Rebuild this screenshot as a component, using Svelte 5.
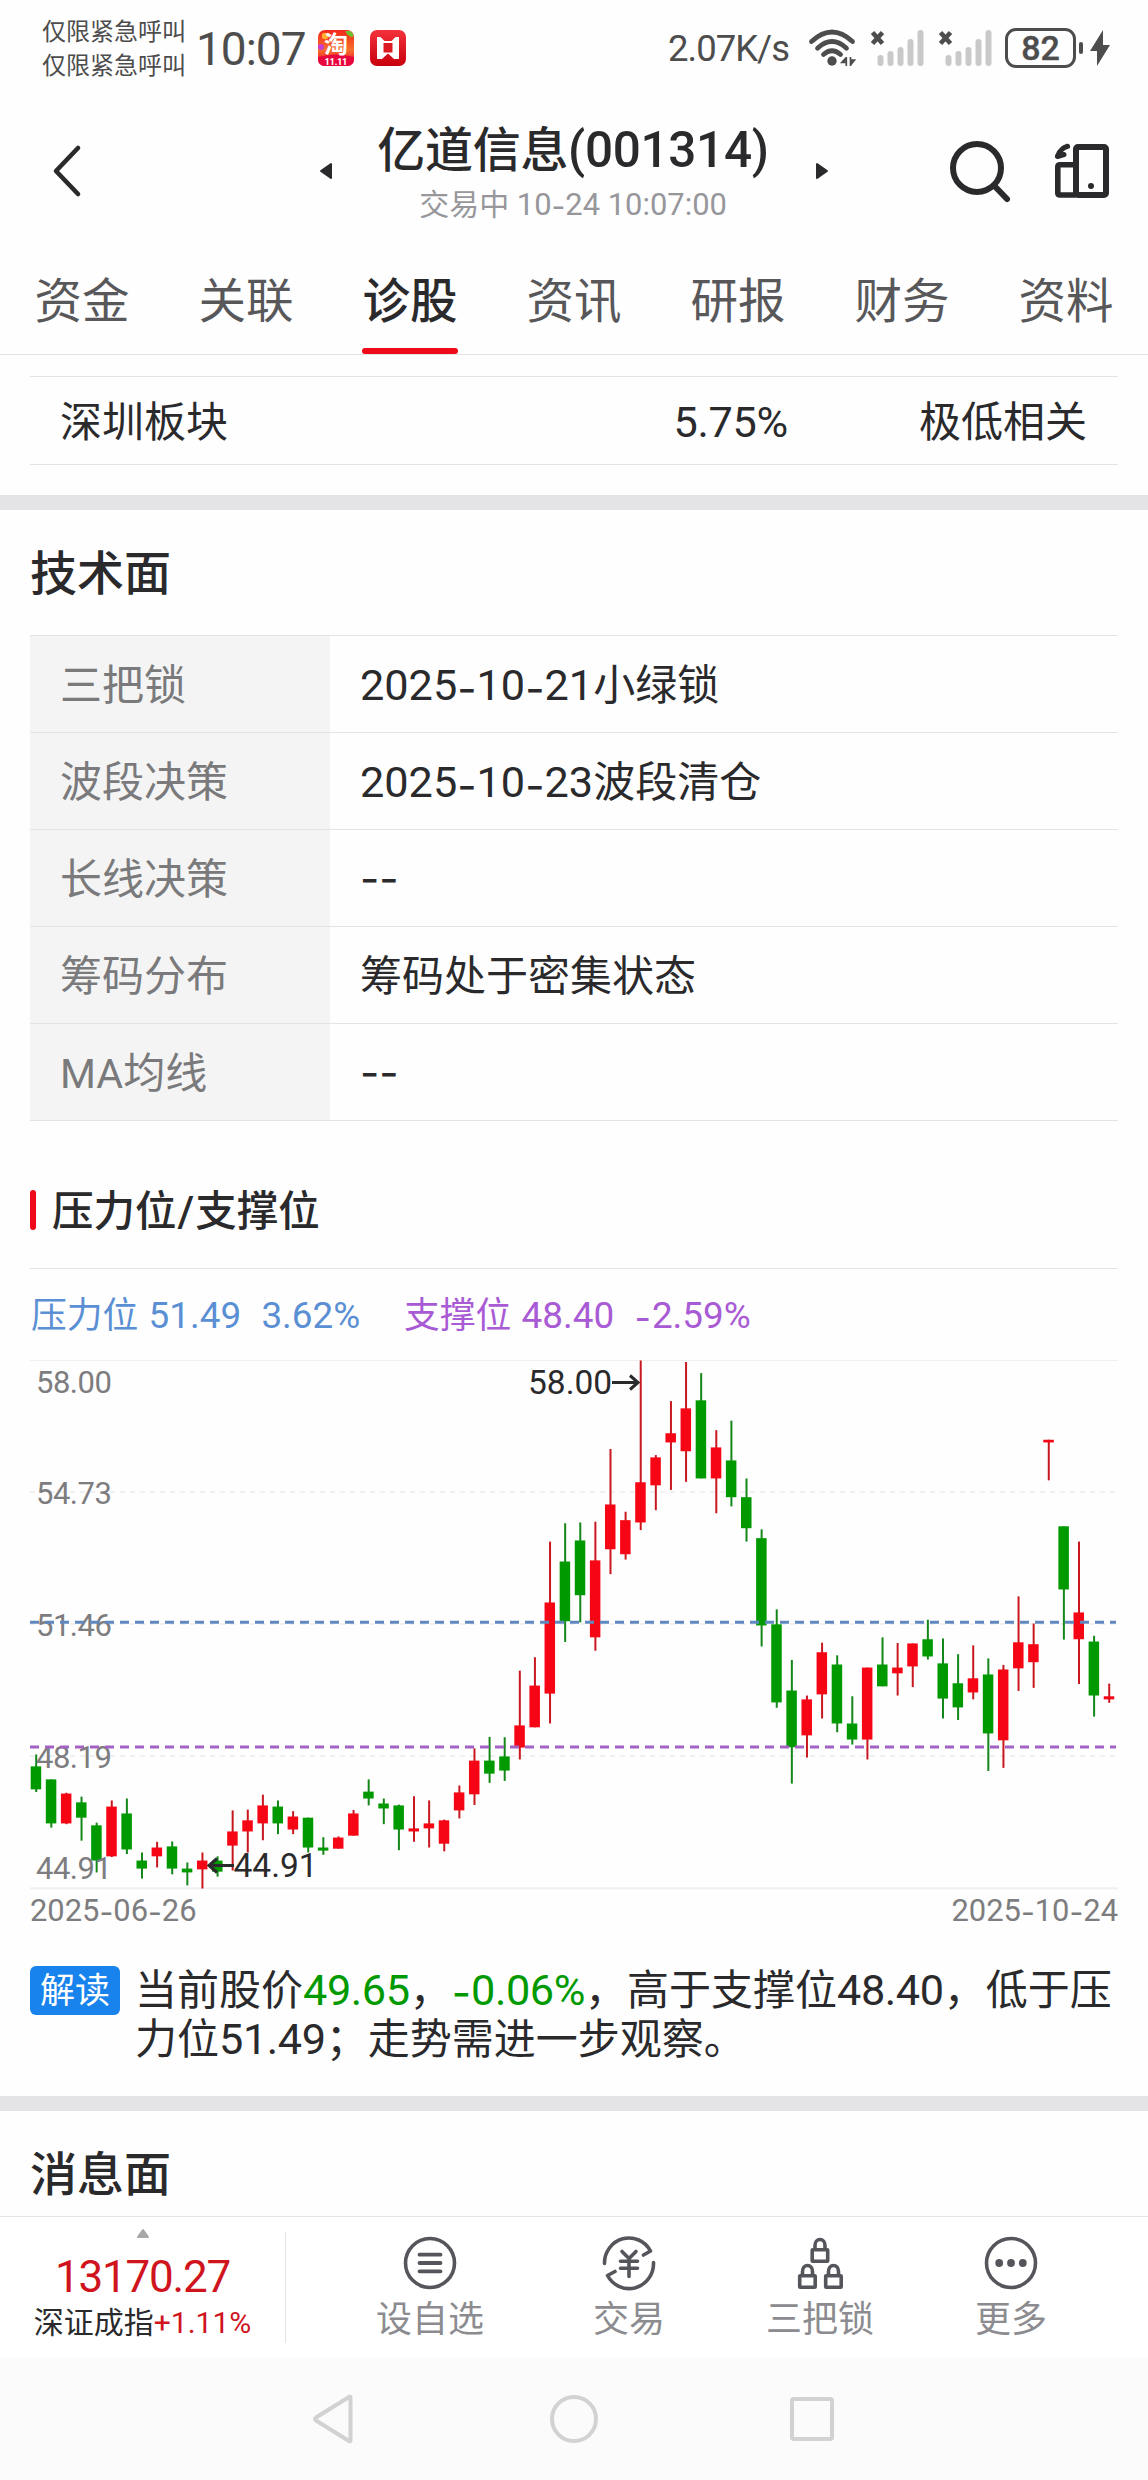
<script>
  const tabs = ['资金', '关联', '诊股', '资讯', '研报', '财务', '资料'];
  const rows = [
    ['三把锁', '2025-10-21小绿锁'],
    ['波段决策', '2025-10-23波段清仓'],
    ['长线决策', '--'],
    ['筹码分布', '筹码处于密集状态'],
    ['MA均线', '--']
  ];

  // Each candle: high, body top, body bottom, low, direction (1 = up, 0 = down).
  // Levels count downwards from TOP to BOTTOM of the plot.
  const TOP = 53;
  const BOTTOM = 1432;
  const HEIGHT = 528;
  const candles = [
    [1082, 1113, 1173, 1180, 0], [1147, 1147, 1262, 1273, 0], [1182, 1184, 1262, 1264, 1],
    [1192, 1207, 1247, 1307, 0], [1260, 1267, 1359, 1390, 0], [1202, 1218, 1348, 1350, 1],
    [1197, 1236, 1330, 1342, 0], [1338, 1359, 1380, 1406, 0], [1310, 1325, 1348, 1377, 1],
    [1309, 1322, 1380, 1395, 0], [1364, 1380, 1390, 1424, 0], [1338, 1359, 1382, 1432, 1],
    [1348, 1359, 1388, 1401, 0], [1228, 1283, 1320, 1385, 1], [1226, 1254, 1283, 1338, 1],
    [1187, 1215, 1262, 1306, 1], [1202, 1218, 1262, 1290, 0], [1230, 1244, 1278, 1290, 1],
    [1247, 1247, 1325, 1338, 0], [1298, 1325, 1333, 1344, 0], [1296, 1299, 1328, 1328, 1],
    [1227, 1236, 1294, 1294, 1], [1147, 1179, 1197, 1215, 0], [1197, 1210, 1223, 1264, 0],
    [1213, 1215, 1278, 1332, 0], [1191, 1275, 1283, 1310, 1], [1202, 1262, 1275, 1325, 1],
    [1252, 1254, 1315, 1335, 1], [1163, 1181, 1228, 1249, 1], [1066, 1098, 1186, 1214, 1],
    [1036, 1098, 1132, 1156, 0], [1037, 1087, 1124, 1151, 0], [863, 1006, 1064, 1095, 1],
    [828, 902, 1011, 1011, 1], [526, 685, 923, 1001, 1], [478, 578, 734, 788, 0],
    [476, 523, 666, 737, 0], [474, 575, 776, 811, 1], [284, 429, 546, 611, 1],
    [448, 470, 559, 573, 1], [53, 371, 476, 496, 1], [300, 306, 379, 444, 1],
    [159, 243, 267, 391, 1], [57, 178, 290, 370, 1], [86, 157, 361, 361, 0],
    [235, 280, 361, 452, 1], [210, 314, 410, 434, 0], [361, 410, 491, 526, 0],
    [494, 517, 745, 800, 0], [703, 742, 946, 960, 0], [835, 915, 1063, 1158, 0],
    [928, 938, 1032, 1090, 1], [790, 815, 925, 988, 1], [823, 847, 1001, 1024, 0],
    [930, 1001, 1043, 1056, 0], [855, 855, 1043, 1095, 1], [776, 847, 904, 904, 0],
    [791, 855, 870, 928, 1], [792, 792, 852, 906, 1], [730, 781, 826, 834, 0],
    [779, 844, 936, 988, 0], [820, 896, 959, 992, 0], [797, 883, 920, 938, 1],
    [831, 873, 1027, 1125, 0], [848, 860, 1045, 1117, 1], [669, 789, 857, 916, 1],
    [740, 794, 841, 908, 1], [260, 260, 267, 366, 1], [486, 486, 651, 782, 0],
    [526, 711, 781, 898, 1], [772, 787, 928, 983, 0], [897, 930, 938, 947, 1]
  ];
  const y = (v) => ((v - TOP) / (BOTTOM - TOP)) * HEIGHT + 0.5;
  const x = (i) => 6.2 + i * 15.113;

  const axis = [['58.00', 33], ['54.73', 144], ['51.46', 276], ['48.19', 408], ['44.91', 519]];

  // Split a string into latin, dash and CJK runs so each gets its own face.
  function runs(s) {
    return (s.match(/-+|[0-9A-Za-z.%:()+/ ]+|[^-0-9A-Za-z.%:()+/ ]+/g) ?? []).map((t) => ({
      t,
      k: t[0] === '-' ? 'dash' : /^[A-Z]/.test(t) ? 'lat abc' : /^[0-9.%:()+/ ]/.test(t) ? 'lat' : 'cjk'
    }));
  }
</script>

{#snippet mix(s)}{#each runs(s) as r}<span class={r.k}>{r.t}</span>{/each}{/snippet}

{#snippet signal()}
  <svg class="signal" viewBox="0 0 54 36">
    <path d="M2.5 2.5 12.5 13.5M12.5 2.5 2.5 13.5" stroke="#4d4d4d" stroke-width="4.6" fill="none" />
    <path d="M10.5 28v5M20.5 24v9M30.5 20v13M40.5 12v21M50.5 3v30" stroke="#c9c9c9" stroke-width="6" stroke-linecap="round" />
  </svg>
{/snippet}

<div class="screen">
  <header class="status">
    <div class="carrier"><span>仅限紧急呼叫</span><span>仅限紧急呼叫</span></div>
    <div class="clock">10:07</div>
    <svg class="app" viewBox="0 0 36 36">
      <defs>
        <linearGradient id="tb" x1="0" y1="0" x2="0" y2="1"><stop offset="0" stop-color="#f3261d" /><stop offset="0.55" stop-color="#f7702a" /><stop offset="0.76" stop-color="#ef3a2c" /><stop offset="1" stop-color="#e80a3d" /></linearGradient>
        <linearGradient id="rd" x1="0" y1="0" x2="0" y2="1"><stop offset="0" stop-color="#f4323a" /><stop offset="1" stop-color="#c8000c" /></linearGradient>
      </defs>
      <rect width="36" height="36" rx="7" fill="url(#tb)" />
      <circle cx="7" cy="6" r="3.2" fill="#ffb02e" />
      <path d="M27 1h5q4 2 3 6-5 0-8-6z" fill="#6fbf2c" />
      <circle cx="3" cy="17" r="3" fill="#c93bd2" />
      <path d="M0 27Q18 22 36 27v2q0 7-7 7H7q-7 0-7-7z" fill="#e9063f" />
      <text x="18" y="23" class="tao">淘</text>
      <text x="18" y="34.500" class="eleven">11.11</text>
    </svg>
    <svg class="app second" viewBox="0 0 36 36">
      <rect width="36" height="36" rx="7" fill="url(#rd)" />
      <path d="M7 7h3.500l4 4h7l4-4H29v22h-5l-6-5.500-6 5.500H7z" fill="#fff" />
      <path d="M13.500 13h9v9.500h-9z" fill="#dd1a24" />
    </svg>
    <div class="fill"></div>
    <div class="speed">2.07K/s</div>
    <svg class="wifi" viewBox="0 0 46 36">
      <path d="M2.500 11.500Q23-7.500 43.500 11.500M8.500 18.200Q23 4.800 37.500 18.200M14.500 24.500Q23 17 31.500 24.500" fill="none" stroke="#4d4d4d" stroke-width="4.800" stroke-linecap="round" />
      <circle cx="23" cy="31" r="4.700" fill="#4d4d4d" />
      <path d="M37.300 27V36M36.800 28l-4 4.500h4M41.500 36V27M42 34.500l3.500-4.500h-3.500" stroke="#4d4d4d" stroke-width="1.700" fill="#4d4d4d" />
    </svg>
    {@render signal()}
    {@render signal()}
    <div class="battery">82</div>
    <div class="nub"></div>
    <svg class="bolt" viewBox="0 0 20 36"><path d="M13 0 0 21h7v15L20 15h-7z" fill="#4d4d4d" /></svg>
  </header>

  <div class="head">
    <svg class="back" viewBox="0 0 30 54"><path d="M26 4 4 27l22 23" fill="none" stroke="#2a2a2c" stroke-width="4.600" stroke-linecap="round" stroke-linejoin="round" /></svg>
    <svg class="tri prev" viewBox="0 0 12 16"><path d="M11 1v14L1 8z" fill="#2a2a2c" stroke="#2a2a2c" stroke-width="2" stroke-linejoin="round" /></svg>
    <div class="titles">
      <h1>{@render mix('亿道信息(001314)')}</h1>
      <p>{@render mix('交易中 10-24 10:07:00')}</p>
    </div>
    <svg class="tri next" viewBox="0 0 12 16"><path d="M1 1v14l10-7z" fill="#2a2a2c" stroke="#2a2a2c" stroke-width="2" stroke-linejoin="round" /></svg>
    <svg class="search" viewBox="0 0 60 60"><circle cx="27" cy="27" r="24" fill="none" stroke="#2a2a2c" stroke-width="6" /><path d="M45 45.500 57 58" stroke="#2a2a2c" stroke-width="6" stroke-linecap="round" /></svg>
    <svg class="cast" viewBox="0 0 54 54">
      <rect x="21" y="3" width="30" height="48" rx="2" fill="none" stroke="#2a2a2c" stroke-width="6" />
      <path d="M20 20.700H5q-2.200 0-2.200 2V49q0 2 2.200 2h16" fill="none" stroke="#2a2a2c" stroke-width="5.600" />
      <path d="M12.500 2.300Q6 4 3 11.500" fill="none" stroke="#2a2a2c" stroke-width="5.200" stroke-linecap="round" />
      <path d="M2.500 12.500 9 10.500" fill="none" stroke="#2a2a2c" stroke-width="5" stroke-linecap="round" />
      <circle cx="36" cy="42" r="3" fill="#2a2a2c" />
    </svg>
  </div>

  <nav class="tabs">
    {#each tabs as t}<span class:active={t === '诊股'}>{t}</span>{/each}
  </nav>

  <div class="sector">
    <span>深圳板块</span><span class="pct">{@render mix('5.75%')}</span><span>极低相关</span>
  </div>

  <div class="band"></div>
  <h2>技术面</h2>
  <div class="table">
    {#each rows as [k, v]}
      <div class="row"><div class="key">{@render mix(k)}</div><div class="val">{@render mix(v)}</div></div>
    {/each}
  </div>

  <h3><i></i><span>{@render mix('压力位/支撑位')}</span></h3>

  <div class="legend">
    <span class="blue">{@render mix('压力位 51.49  3.62%')}</span>
    <span class="purple">{@render mix('支撑位 48.40  -2.59%')}</span>
  </div>

  <svg class="chart" viewBox="0 0 1088 530">
    <path d="M0 .5H1088" stroke="#f0f0f0" stroke-width="1" />
    <path d="M0 528.300H1088" stroke="#f0f0f0" stroke-width="2" />
    <path d="M0 132H1088M0 264H1088M0 396H1088" stroke="#f0f0f0" stroke-width="2" stroke-dasharray="5 5" />
    {#each candles as [h, a, b, l, up], i}
      <path d="M{x(i)} {y(h)}V{y(l)}" stroke={up ? '#c8171f' : '#14861a'} stroke-width="2" />
      <rect x={x(i) - 5.5} y={y(a)} width="10.500" height={y(b) - y(a)} fill={up ? '#f60514' : '#009a00'} />
    {/each}
    {#each axis as [t, b]}<text x="6" y={b} class="tick">{t}</text>{/each}
    <path d="M0 262.300H1086" stroke="#5f88c0" stroke-width="3" stroke-dasharray="9 6" />
    <path d="M0 387H1086" stroke="#a463c4" stroke-width="3" stroke-dasharray="9 6" />
    <text x="498" y="34" class="mark">58.00</text>
    <path d="M582 22.500h26M600 15.500l8 7-8 7" class="arrow" />
    <text x="203.500" y="516.500" class="mark">44.91</text>
    <path d="M204 505.500h-25M187 498.500l-8 7 8 7" class="arrow" />
  </svg>
  <div class="dates"><span>{@render mix('2025-06-26')}</span><span>{@render mix('2025-10-24')}</span></div>

  <div class="note">
    <b>解读</b>
    <p>{@render mix('当前股价')}<em>{@render mix('49.65')}</em>{@render mix('，')}<em>{@render mix('-0.06%')}</em>{@render mix('，高于支撑位48.40，低于压')}<br />{@render mix('力位51.49；走势需进一步观察。')}</p>
  </div>

  <div class="band"></div>
  <h2 class="last">消息面</h2>

  <footer class="bar">
    <div class="index">
      <svg viewBox="0 0 12 9"><path d="M6 1 11 8H1z" fill="#a6a7a9" stroke="#a6a7a9" stroke-width="2" stroke-linejoin="round" /></svg>
      <strong>13170.27</strong>
      <p>深证成指<em>+1.11%</em></p>
    </div>
    <div class="item i1">
      <svg viewBox="0 0 54 54"><circle cx="27" cy="27" r="24.500" /><path d="M16.500 18.700h21M16.500 27h21M16.500 35.300h21" stroke-width="3.800" /></svg>
      <span>设自选</span>
    </div>
    <div class="item i2">
      <svg viewBox="0 0 54 54">
        <path d="M2.500 27.500A24.500 25 0 0 1 48.500 15L41.500 19M51.500 26.500A24.500 25 0 0 1 5.500 39.500L13 35.500" />
        <path d="M20 15.500 27 22.500 34 15.500M18.500 25.300h17M18.500 32.300h17M27 23v17.500" />
      </svg>
      <span>交易</span>
    </div>
    <div class="item i3">
      <svg viewBox="0 0 54 54">
        <rect x="19.200" y="13.700" width="15.500" height="11.500" rx=".5" /><path d="M22 13V9.500a5 6 0 0 1 10 0V13" />
        <rect x="6.700" y="39.700" width="15.500" height="11.500" rx=".5" /><path d="M9.500 39v-3.500a5 6 0 0 1 10 0V39" />
        <rect x="32.700" y="39.700" width="15.500" height="11.500" rx=".5" /><path d="M35.500 39v-3.500a5 6 0 0 1 10 0V39" />
      </svg>
      <span>三把锁</span>
    </div>
    <div class="item i4">
      <svg viewBox="0 0 54 54"><circle cx="27" cy="27" r="24.500" /><g class="dots"><circle cx="15.200" cy="27" r="3.900" /><circle cx="27" cy="27" r="3.900" /><circle cx="38.800" cy="27" r="3.900" /></g></svg>
      <span>更多</span>
    </div>
  </footer>

  <div class="nav">
    <svg viewBox="0 0 44 50"><path d="M38.500 3.500v43Q38.500 48 37 47L4 26.500Q2 25 4 23.500L37 3Q38.500 2 38.500 3.500z" /></svg>
    <svg viewBox="0 0 50 50"><circle cx="25" cy="25" r="22" /></svg>
    <svg viewBox="0 0 44 50"><rect x="2" y="5" width="40" height="40" rx="2" /></svg>
  </div>
</div>

<style>
  :global(body) { background: #fefefe; }
  .screen {
    width: 1148px; height: 2480px; overflow: hidden; display: flex; flex-direction: column;
    background: #fefefe; color: #2a2a2c;
    font-family: Roboto, 'Noto Sans CJK SC', sans-serif;
    font-size: 42px; line-height: 1; white-space: nowrap;
  }
  .screen > * { flex: none; box-sizing: border-box; }
  svg { display: block; flex: none; overflow: visible; }
  h1, h2, h3, p { margin: 0; font-weight: 400; }
  em { font-style: normal; }
  .lat { font-family: Roboto, sans-serif; font-size: 1.03em; line-height: 0; white-space: pre; }
  .abc { font-size: .98em; }
  .dash { font-family: Inter, sans-serif; line-height: 0; vertical-align: -.07em; }
  .cjk { font-family: 'Noto Sans CJK SC', sans-serif; }

  .status { height: 95px; display: flex; align-items: center; padding: 0 38px 0 42px; color: #4d4d4d; }
  .carrier { display: flex; flex-direction: column; gap: 10px; width: 154px; font-size: 24px; font-family: 'Noto Sans CJK SC', sans-serif; padding-bottom: 2px; }
  .clock { width: 122px; font-size: 46px; letter-spacing: -1px; padding-top: 2px; }
  .app { width: 36px; height: 36px; }
  .second { margin-left: 16px; }
  .tao { font: 700 24px 'Noto Sans CJK SC', sans-serif; fill: #fff; text-anchor: middle; }
  .eleven { font: 900 8.500px Roboto, sans-serif; fill: #fff; text-anchor: middle; }
  .fill { flex: 1; }
  .speed { font-size: 36.500px; letter-spacing: -1px; margin-right: 20px; padding-top: 3px; }
  .wifi { width: 46px; height: 36px; margin-right: 15px; }
  .signal { width: 54px; height: 36px; margin-right: 14px; }
  .battery {
    box-sizing: border-box; width: 71px; height: 40px; border: 3px solid #4d4d4d; border-radius: 11px; margin-left: -1px;
    display: flex; align-items: center; justify-content: center; font-size: 34px; font-weight: 500; padding-top: 1px; -webkit-text-stroke: .4px #4d4d4d;
  }
  .nub { width: 4px; height: 12px; border-radius: 2px; background: #4d4d4d; margin: 0 7px 0 3px; }
  .bolt { width: 20px; height: 36px; }

  .head { height: 151px; display: flex; align-items: center; padding: 0 39px 0 52px; }
  .back { width: 30px; height: 54px; margin-right: 238px; }
  .tri { width: 12px; height: 16px; }
  .titles { width: 484px; display: flex; flex-direction: column; align-items: center; gap: 7px; padding-right: 2px; box-sizing: border-box; }
  h1 { font-size: 48px; font-weight: 500; line-height: 54px; letter-spacing: -.3px; }
  .titles p { font-size: 30px; line-height: 34px; color: #97979b; }
  .search { width: 60px; height: 60px; margin: 0 44px 0 122px; }
  .cast { width: 54px; height: 54px; margin-left: 1px; }

  .tabs { height: 109px; display: flex; justify-content: space-between; padding: 0 34px; border-bottom: 1px solid #e4e4e6; color: #58585a; font-size: 47.500px; }
  .tabs span { width: 96px; text-align: center; line-height: 112px; box-sizing: border-box; height: 108px; display: flex; flex-direction: column; }
  .tabs .active { color: #2a2a2c; font-weight: 500; }
  .tabs .active::after { content: ''; height: 6px; flex: none; border-radius: 3px; background: #ee0a18; margin-top: -10px; }

  .sector { margin: 21px 30px 30px; height: 89px; display: flex; align-items: center; padding: 4px 31px 0 30px; border: solid #e4e4e6; border-width: 1px 0; }
  .sector .pct { margin: 0 131px 0 auto; letter-spacing: -.3px; }
  .band { height: 15px; background: #e4e4e6; }
  h2 { height: 125px; padding-left: 30px; font-size: 47px; font-weight: 500; line-height: 127px; }
  .table { margin: 0 30px; border-top: 1px solid #e4e4e6; }
  .row { display: flex; height: 97px; line-height: 91px; border-bottom: 1px solid #e4e4e6; box-sizing: border-box; }
  .row .dash { vertical-align: -.1em; }
  .key { width: 300px; box-sizing: border-box; padding-left: 30px; background: #f4f4f4; color: #7a7a7c; }
  .val { padding-left: 30px; }

  h3 { margin: 0 30px; height: 148px; padding-top: 31px; display: flex; align-items: center; font-size: 41.500px; font-weight: 500; border-bottom: 1px solid #e4e4e6; }
  h3 i { width: 6px; height: 40px; border-radius: 3px; background: #ee0a18; margin-right: 16px; }
  h3 .lat { margin: 0 1px; }
  .legend { height: 91px; padding: 1px 31px 0; display: flex; align-items: center; font-size: 35.800px; word-spacing: 1px; }
  .blue { width: 373px; color: #5b8fd4; }
  .purple { color: #a85bd4; }
  .purple .dash { margin-right: 1px; }

  .chart { width: 1088px; height: 530px; margin-left: 30px; }
  .tick { font: 31px Roboto, sans-serif; letter-spacing: -.5px; fill: #7d7d7f; }
  .mark { font: 33.500px Roboto, sans-serif; fill: #2a2a2c; }
  .arrow { fill: none; stroke: #2a2a2c; stroke-width: 3; }
  .dates { display: flex; justify-content: space-between; height: 76px; padding: 4px 30px 0; font-size: 30px; line-height: 34px; color: #7d7d7f; }

  .note { display: flex; height: 130px; padding-left: 30px; }
  .note b { width: 90px; height: 49px; margin-right: 15px; border-radius: 6px; background: #1883ec; color: #fff; font-size: 35px; font-weight: 400; line-height: 52px; text-align: center; }
  .note p { font-family: 'Noto Sans CJK SC', sans-serif; line-height: 49px; margin-top: -4px; }
  .note .lat { letter-spacing: -.4px; }
  .note em { color: #009a00; }
  .last { height: 105px; }

  .bar { height: 142px; border-top: 1px solid #e4e4e6; display: flex; background: #fff; }
  .index { box-sizing: border-box; width: 286px; height: 111px; margin-top: 15px; border-right: 1px solid #e4e4e6; display: flex; flex-direction: column; align-items: center; }
  .index svg { width: 12px; height: 9px; margin-top: -3px; }
  .index strong { margin-top: 13px; font-size: 44px; font-weight: 400; color: #d0141e; line-height: 52px; letter-spacing: -1.200px; }
  .index p { font-size: 30px; line-height: 40px; }
  .index em { color: #d0141e; }
  .item { width: 120px; display: flex; flex-direction: column; align-items: center; padding-top: 19px; font-size: 36px; color: #8c8c90; }
  .item svg { width: 54px; height: 54px; fill: none; stroke: #55565c; stroke-width: 3.600; stroke-linecap: round; stroke-linejoin: round; }
  .item .dots { fill: #55565c; stroke: none; }
  .item span { margin-top: 12px; }
  .i1 { margin-left: 84px; }
  .i2 { margin-left: 79px; }
  .i3 { margin-left: 71px; }
  .i4 { margin-left: 71px; }

  .nav { height: 122px; background: #fbfbfb; display: flex; padding: 36px 0 0 312px; }
  .nav svg { height: 50px; width: 44px; fill: none; stroke: #d2d2d2; stroke-width: 4; }
  .nav svg:nth-child(2) { width: 50px; margin: 0 191px 0 193px; }
</style>
